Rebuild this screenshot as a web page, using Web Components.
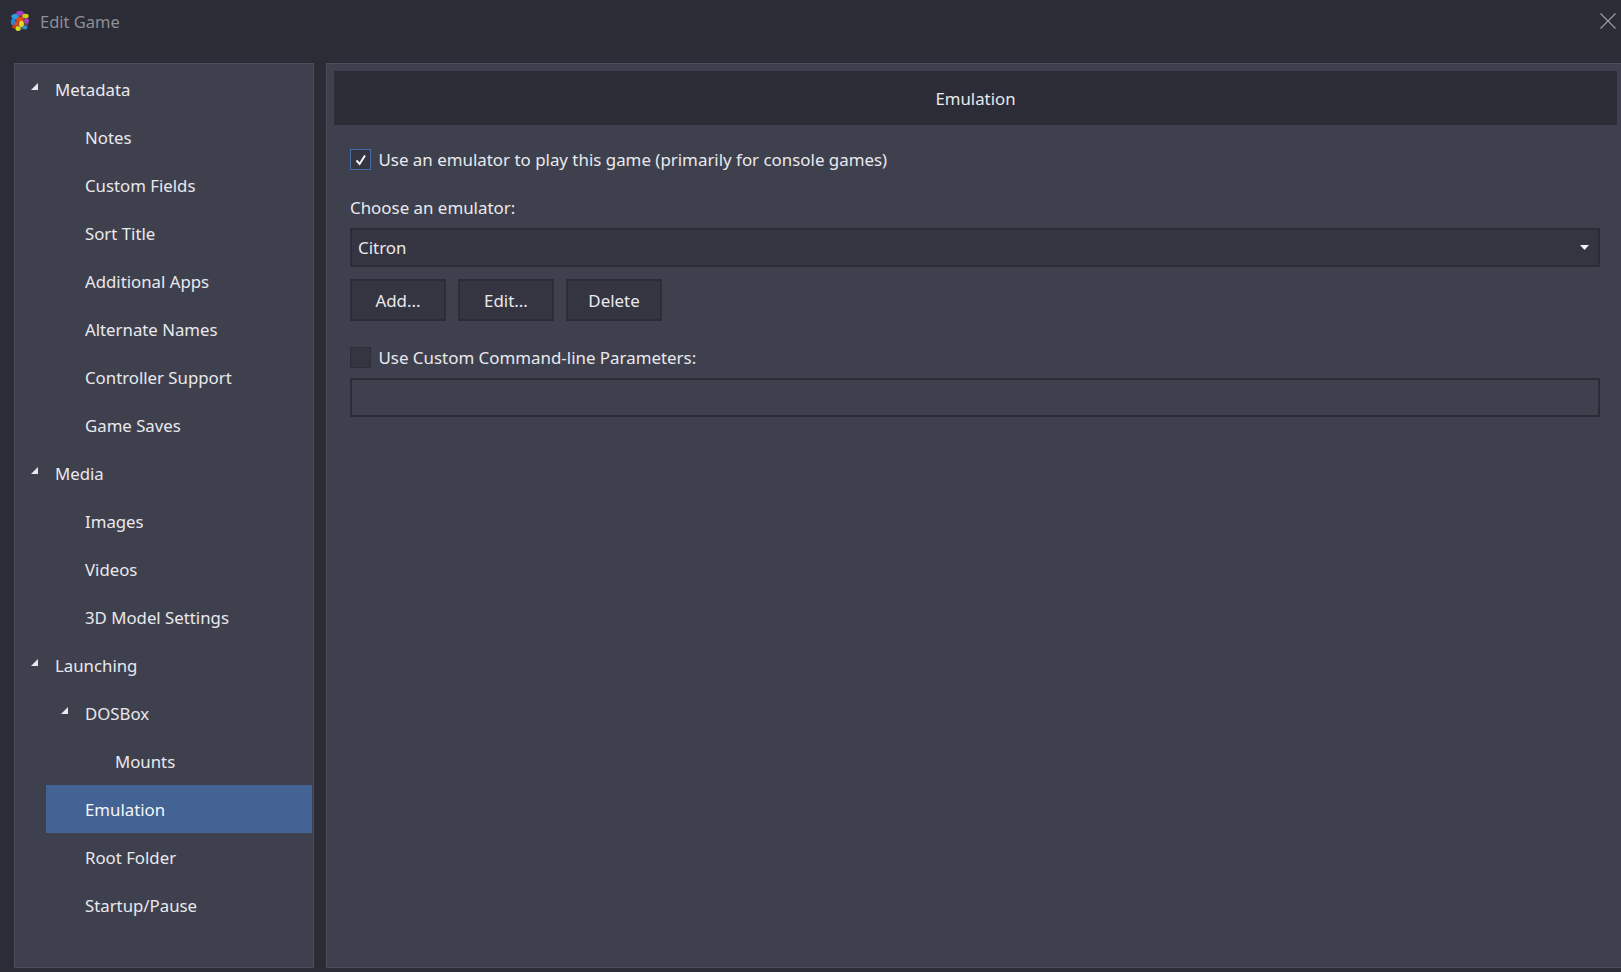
<!DOCTYPE html>
<html>
<head>
<meta charset="utf-8">
<title>Edit Game</title>
<style>
    html, body {
        margin: 0;
        padding: 0;
        height: 100%;
        overflow: hidden;
        background: #2b2c36;
        color: #e9e9ed;
        font-family: 'Noto Sans', 'Open Sans', Arial, sans-serif;
        font-size: 16.8px;
    }
</style>
</head>
<body>
<edit-game-window>
    <title-bar slot="title" label="Edit Game"></title-bar>
    <nav-tree slot="nav">
        <tree-item label="Metadata" level="0" expanded></tree-item>
        <tree-item label="Notes" level="1"></tree-item>
        <tree-item label="Custom Fields" level="1"></tree-item>
        <tree-item label="Sort Title" level="1"></tree-item>
        <tree-item label="Additional Apps" level="1"></tree-item>
        <tree-item label="Alternate Names" level="1"></tree-item>
        <tree-item label="Controller Support" level="1"></tree-item>
        <tree-item label="Game Saves" level="1"></tree-item>
        <tree-item label="Media" level="0" expanded></tree-item>
        <tree-item label="Images" level="1"></tree-item>
        <tree-item label="Videos" level="1"></tree-item>
        <tree-item label="3D Model Settings" level="1"></tree-item>
        <tree-item label="Launching" level="0" expanded></tree-item>
        <tree-item label="DOSBox" level="1" expanded></tree-item>
        <tree-item label="Mounts" level="2"></tree-item>
        <tree-item label="Emulation" level="1" selected></tree-item>
        <tree-item label="Root Folder" level="1"></tree-item>
        <tree-item label="Startup/Pause" level="1"></tree-item>
    </nav-tree>
    <emulation-page slot="page"></emulation-page>
</edit-game-window>

<script>
class EditGameWindow extends HTMLElement {
    connectedCallback() {
        this.root = this.attachShadow({ mode: 'open' });
        this.root.innerHTML = `
<style>
    :host {
        display: grid;
        grid-template-columns: 300px 1fr;
        grid-template-rows: 63px 905px;
        column-gap: 12px;
        height: 972px;
        padding-left: 14px;
        box-sizing: border-box;
    }
    .top {
        grid-column: 1 / 3;
        margin-left: -14px;
    }
</style>
<div class="top"><slot name="title"></slot></div>
<slot name="nav"></slot>
<slot name="page"></slot>`;
    }
}

class TitleBar extends HTMLElement {
    connectedCallback() {
        this.root = this.attachShadow({ mode: 'open' });
        this.root.innerHTML = `
<style>
    :host {
        display: flex;
        align-items: center;
        height: 42px;
        padding: 0 5px 0 10px;
        color: #8e8f97;
        font-size: 16.5px;
    }
    .name { margin-left: 10px; flex: 1; }
    svg { display: block; }
</style>
<svg width="20" height="22" viewBox="0 0 20 22">
    <path d="M10 1 L18 5 L18 16 L10 21 L2 16 L2 5 Z" fill="#5a4a4a"/>
    <ellipse cx="10" cy="3.2" rx="3.6" ry="2.4" fill="#a83bc0"/>
    <ellipse cx="5" cy="6.5" rx="3.6" ry="2.6" fill="#2a9de0"/>
    <ellipse cx="15.5" cy="6" rx="3.2" ry="2.2" fill="#d8c818"/>
    <ellipse cx="10" cy="9.5" rx="3.6" ry="2.6" fill="#f0480c"/>
    <ellipse cx="3.2" cy="12" rx="2.4" ry="3.2" fill="#1f88d8"/>
    <ellipse cx="16.6" cy="11" rx="2.4" ry="2.8" fill="#a83bc0"/>
    <ellipse cx="11.5" cy="14" rx="2.4" ry="3.2" fill="#e8d820"/>
    <ellipse cx="6.5" cy="14" rx="2.2" ry="2.6" fill="#e8471c"/>
    <ellipse cx="8" cy="18.6" rx="2.6" ry="2.4" fill="#d8e020"/>
    <ellipse cx="14.8" cy="17.4" rx="2.6" ry="2" fill="#2d8ed0"/>
    <ellipse cx="3.6" cy="16.8" rx="1.8" ry="1.6" fill="#cc3a10"/>
</svg>
<span class="name">${this.getAttribute('label')}</span>
<svg width="16" height="16" viewBox="0 0 16 16">
    <path d="M.5 .5 L15.5 15.5 M15.5 .5 L.5 15.5" stroke="#9a9aa1" stroke-width="1.2" fill="none"/>
</svg>`;
    }
}

class NavTree extends HTMLElement {
    connectedCallback() {
        this.root = this.attachShadow({ mode: 'open' });
        this.root.innerHTML = `
<style>
    :host {
        display: block;
        box-sizing: border-box;
        background: #3f404d;
        border: 1px solid #4d4e5c;
        padding: 1px 1px 0 1px;
    }
</style>
<slot></slot>`;
    }
}

class TreeItem extends HTMLElement {
    connectedCallback() {
        const level = Number(this.getAttribute('level'));
        const indent = 30 * level;
        this.root = this.attachShadow({ mode: 'open' });
        this.root.innerHTML = `
<style>
    :host {
        display: block;
        height: 48px;
        margin-left: ${indent}px;
    }
    .row {
        display: flex;
        align-items: center;
        height: 48px;
        padding-left: 9px;
    }
    :host([selected]) .row {
        background: #426393;
        color: #f4f6fa;
    }
    .arrow {
        width: 30px;
        flex: none;
        box-sizing: border-box;
        padding-left: 6px;
    }
    svg { display: block; margin-top: -5px; }
    .label { white-space: nowrap; }
</style>
<div class="row">
    <span class="arrow">${this.hasAttribute('expanded')
        ? '<svg width="7" height="7" viewBox="0 0 7 7"><path d="M7 0 V7 H0 Z" fill="#e9e9ed"/></svg>'
        : ''}</span>
    <span class="label">${this.getAttribute('label')}</span>
</div>`;
    }
}

class CheckBox extends HTMLElement {
    connectedCallback() {
        const on = this.hasAttribute('checked');
        this.root = this.attachShadow({ mode: 'open' });
        this.root.innerHTML = `
<style>
    :host {
        display: flex;
        align-items: center;
        gap: 7.5px;
    }
    .box {
        box-sizing: border-box;
        width: 21px;
        height: 21px;
        background: #343541;
        border: 1px solid #2c2d37;
        display: flex;
        align-items: center;
        justify-content: center;
    }
    :host([checked]) .box { border: 1.5px solid #4a6ca6; }
</style>
<span class="box">${on
    ? '<svg width="12" height="12" viewBox="0 0 12 12"><path d="M1.5 6.5 L4.6 10 L10 1.5" stroke="#fff" stroke-width="1.9" fill="none"/></svg>'
    : ''}</span>
<slot></slot>`;
    }
}

class DropDown extends HTMLElement {
    connectedCallback() {
        this.root = this.attachShadow({ mode: 'open' });
        this.root.innerHTML = `
<style>
    :host {
        display: flex;
        align-items: center;
        justify-content: space-between;
        box-sizing: border-box;
        height: 39px;
        background: #343541;
        border: 2px solid #2b2c36;
        padding: 0 9px 0 6px;
    }
    svg { display: block; }
</style>
<slot></slot>
<svg width="9" height="5" viewBox="0 0 9 5"><path d="M0 0 H9 L4.5 5 Z" fill="#f2f2f4"/></svg>`;
    }
}

class TextBox extends HTMLElement {
    connectedCallback() {
        this.root = this.attachShadow({ mode: 'open' });
        this.root.innerHTML = `
<style>
    :host {
        display: block;
        box-sizing: border-box;
        height: 39px;
        border: 2px solid #2b2c36;
    }
</style>`;
    }
}

class UiButton extends HTMLElement {
    connectedCallback() {
        this.root = this.attachShadow({ mode: 'open' });
        this.root.innerHTML = `
<style>
    :host {
        display: flex;
        align-items: center;
        justify-content: center;
        box-sizing: border-box;
        width: 96px;
        height: 42px;
        background: #343541;
        border: 2px solid #2b2c36;
    }
</style>
<slot></slot>`;
    }
}

class EmulationPage extends HTMLElement {
    connectedCallback() {
        this.root = this.attachShadow({ mode: 'open' });
        this.root.innerHTML = `
<style>
    :host {
        display: block;
        box-sizing: border-box;
        background: #3f404d;
        border-top: 1px solid #4d4e5c;
        border-left: 1px solid #4d4e5c;
        border-bottom: 1px solid #4d4e5c;
        padding: 7px 4px 0 7px;
    }
    header {
        height: 54px;
        display: flex;
        align-items: center;
        justify-content: center;
        background: #2b2c36;
    }
    .body {
        padding: 23px 17px 0 16px;
        display: flex;
        flex-direction: column;
        font-size: 16.9px;
    }
    .label { margin: 22px 0 5px; height: 30px; line-height: 30px; }
    .buttons { display: flex; gap: 12px; margin-top: 12px; }
    .custom { margin-top: 25px; }
    text-box { margin-top: 9px; }
</style>
<header>Emulation</header>
<div class="body">
    <check-box checked>Use an emulator to play this game (primarily for console games)</check-box>
    <div class="label">Choose an emulator:</div>
    <drop-down>Citron</drop-down>
    <div class="buttons">
        <ui-button>Add...</ui-button>
        <ui-button>Edit...</ui-button>
        <ui-button>Delete</ui-button>
    </div>
    <check-box class="custom">Use Custom Command-line Parameters:</check-box>
    <text-box></text-box>
</div>`;
    }
}

customElements.define('edit-game-window', EditGameWindow);
customElements.define('title-bar', TitleBar);
customElements.define('nav-tree', NavTree);
customElements.define('tree-item', TreeItem);
customElements.define('check-box', CheckBox);
customElements.define('drop-down', DropDown);
customElements.define('text-box', TextBox);
customElements.define('ui-button', UiButton);
customElements.define('emulation-page', EmulationPage);
</script>
</body>
</html>
